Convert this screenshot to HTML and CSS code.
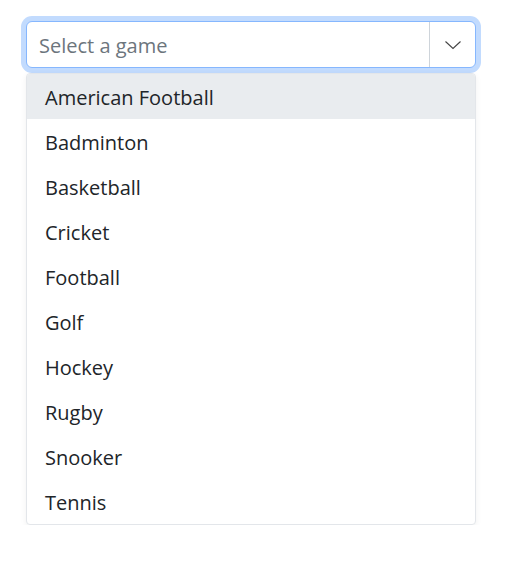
FILE: index.html
```html
<!DOCTYPE html>
<html lang="en">

<head>
  <meta charset="UTF-8">
  <meta name="viewport" content="width=device-width, initial-scale=1.0">
  <title>Select a game</title>
  <link rel="stylesheet" href="styles.css">
</head>

<body>
  <div class="combo">
    <div class="field">
      <input class="field-input" type="text" placeholder="Select a game">
      <span class="field-toggle">
        <svg width="18" height="10" viewBox="0 0 18 10" fill="none" stroke="#444" stroke-width="1.1">
          <path d="M1.5 1.5 L9 8.5 L16.5 1.5" />
        </svg>
      </span>
    </div>
    <ul class="menu">
      <li class="active">American Football</li>
      <li>Badminton</li>
      <li>Basketball</li>
      <li>Cricket</li>
      <li>Football</li>
      <li>Golf</li>
      <li>Hockey</li>
      <li>Rugby</li>
      <li>Snooker</li>
      <li>Tennis</li>
    </ul>
  </div>
</body>

</html>
```

FILE: styles.css
```css
* {
  margin: 0;
  padding: 0;
  list-style: none;
  box-sizing: border-box;
  font-family: 'Open Sans', 'Noto Sans', sans-serif;
}

body {
  background: #fff;
  padding: 21px 0 0 26px;
}

.combo {
  width: 450px;
}

.field {
  display: flex;
  height: 47px;
  border: 1px solid #86b7fe;
  border-radius: 6px;
  background: #fff;
  box-shadow: 0 0 0 5px #c2dbfe;
}

.field-input {
  flex: 1;
  border: 0;
  outline: none;
  padding: 2px 12px 0;
  font-size: 20px;
  color: #212529;
  background: transparent;
}

.field-input::placeholder {
  color: #6c757d;
}

.field-toggle {
  width: 46px;
  border-left: 1px solid #ced4da;
  display: flex;
  align-items: center;
  justify-content: center;
}

.menu {
  margin-top: 5px;
  border: 1px solid #e3e6ea;
  border-radius: 4px;
  background: #fff;
  box-shadow: 0 2px 6px rgba(0, 0, 0, 0.06);
  overflow: hidden;
}

.menu li {
  height: 45px;
  line-height: 45px;
  padding: 1px 0 0 18px;
  font-size: 20px;
  color: #212529;
}

.menu li.active {
  background: #e9ecef;
}
```
